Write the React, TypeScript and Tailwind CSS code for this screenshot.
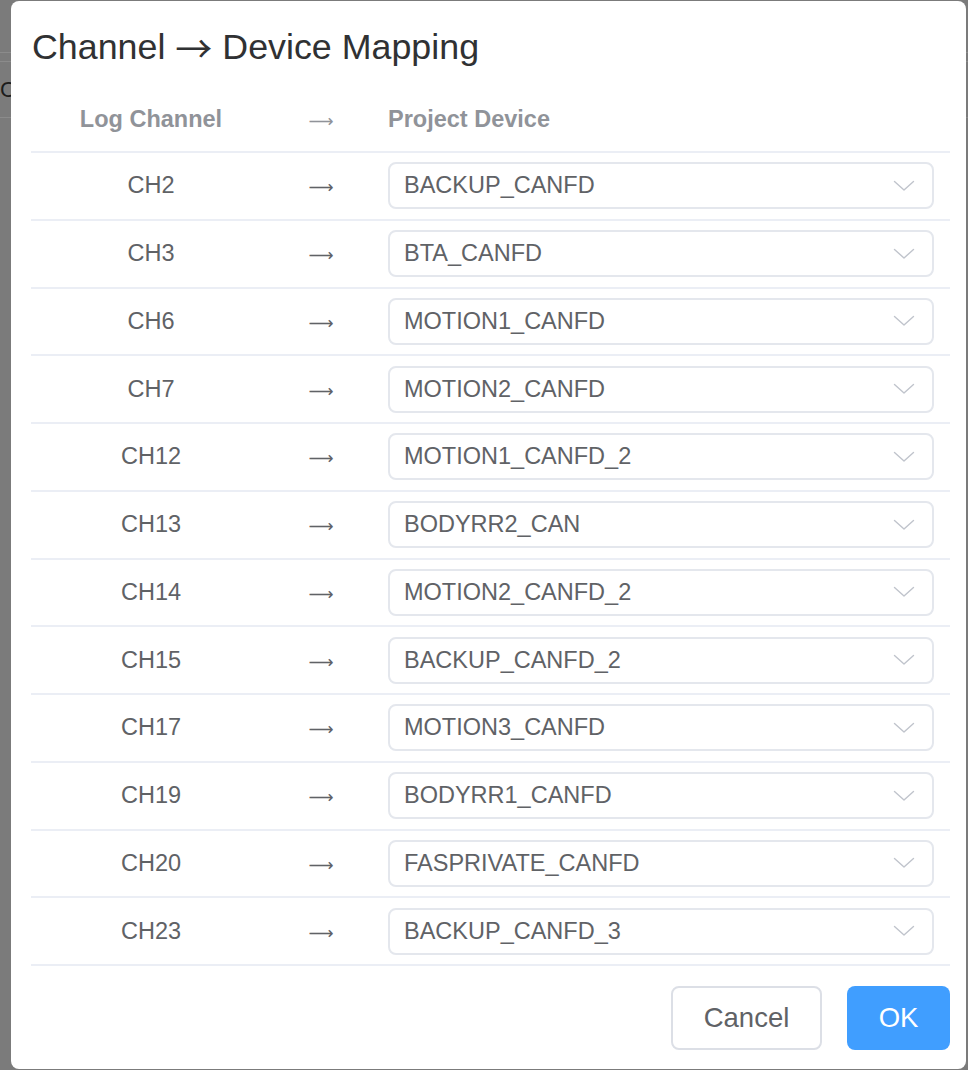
import React from 'react'

const ROWS: [string, string][] = [
  ['CH2', 'BACKUP_CANFD'],
  ['CH3', 'BTA_CANFD'],
  ['CH6', 'MOTION1_CANFD'],
  ['CH7', 'MOTION2_CANFD'],
  ['CH12', 'MOTION1_CANFD_2'],
  ['CH13', 'BODYRR2_CAN'],
  ['CH14', 'MOTION2_CANFD_2'],
  ['CH15', 'BACKUP_CANFD_2'],
  ['CH17', 'MOTION3_CANFD'],
  ['CH19', 'BODYRR1_CANFD'],
  ['CH20', 'FASPRIVATE_CANFD'],
  ['CH23', 'BACKUP_CANFD_3'],
]

function Chevron() {
  return (
    <svg width="22" height="12" viewBox="0 0 22 12" fill="none" className="shrink-0">
      <path d="M1.5 1.5 L11 10 L20.5 1.5" stroke="#c0c4cc" strokeWidth="1.4" strokeLinecap="round" strokeLinejoin="round" />
    </svg>
  )
}

// long thin arrow used in the table columns
function Arrow() {
  return <span className="font-['DejaVu_Sans',sans-serif] text-[17.5px] font-normal">⟶</span>
}

export default function App() {
  return (
    <div className="relative h-[1070px] w-[968px] overflow-hidden bg-[#7b7b7b] font-['Liberation_Sans',Arial,sans-serif]">
      {/* page behind the overlay */}
      <div className="flex flex-col">
        <div className="h-[52px]" />
        <div className="h-[10px] border-y border-[#8b8b8b]" />
        <div className="flex h-[56px] items-center border-b border-[#8b8b8b] text-[22px] leading-none text-[#1c1c1c]">
          <span>Channel</span>
        </div>
      </div>

      {/* dialog */}
      <div className="absolute left-[11px] top-[1px] flex w-[955px] flex-col rounded-[8px] bg-white pl-[20px] pr-[16px] pb-[19px]">
        <div className="flex h-[84px] items-center pl-[1px] pt-[9px] text-[35.8px] leading-none text-[#303133]">
          Channel <span className="mx-[10px] font-['Noto_Sans_CJK_SC',sans-serif] text-[37px]">→</span> Device Mapping
        </div>

        <div className="flex flex-col">
          <div className="flex h-[68px] items-center border-b-2 border-[#ebeef5] pt-[4px] text-[23.5px] font-bold text-[#909399]">
            <div className="w-[240px] text-center">Log Channel</div>
            <div className="w-[100px] text-center"><Arrow /></div>
            <div className="flex-1 pl-[17px]">Project Device</div>
          </div>

          {ROWS.map(([ch, dev]) => (
            <div key={ch} className="flex h-[67.75px] items-center border-b-2 border-[#ebeef5] text-[23.5px] text-[#606266]">
              <div className="w-[240px] text-center">{ch}</div>
              <div className="w-[100px] text-center"><Arrow /></div>
              <div className="flex-1 pl-[17px] pr-[16px]">
                <div className="flex h-[47px] items-center justify-between rounded-[8px] border-2 border-[#e4e7ed] pl-[14px] pr-[17px]">
                  <span>{dev}</span>
                  <Chevron />
                </div>
              </div>
            </div>
          ))}
        </div>

        <div className="flex justify-end gap-[25px] pt-[20px]">
          <button className="h-[64px] w-[151px] rounded-[8px] border-2 border-[#dcdfe6] bg-white text-[27.5px] text-[#606266]">
            Cancel
          </button>
          <button className="h-[64px] w-[103px] rounded-[8px] bg-[#409eff] text-[27.5px] text-white">
            OK
          </button>
        </div>
      </div>
    </div>
  )
}
